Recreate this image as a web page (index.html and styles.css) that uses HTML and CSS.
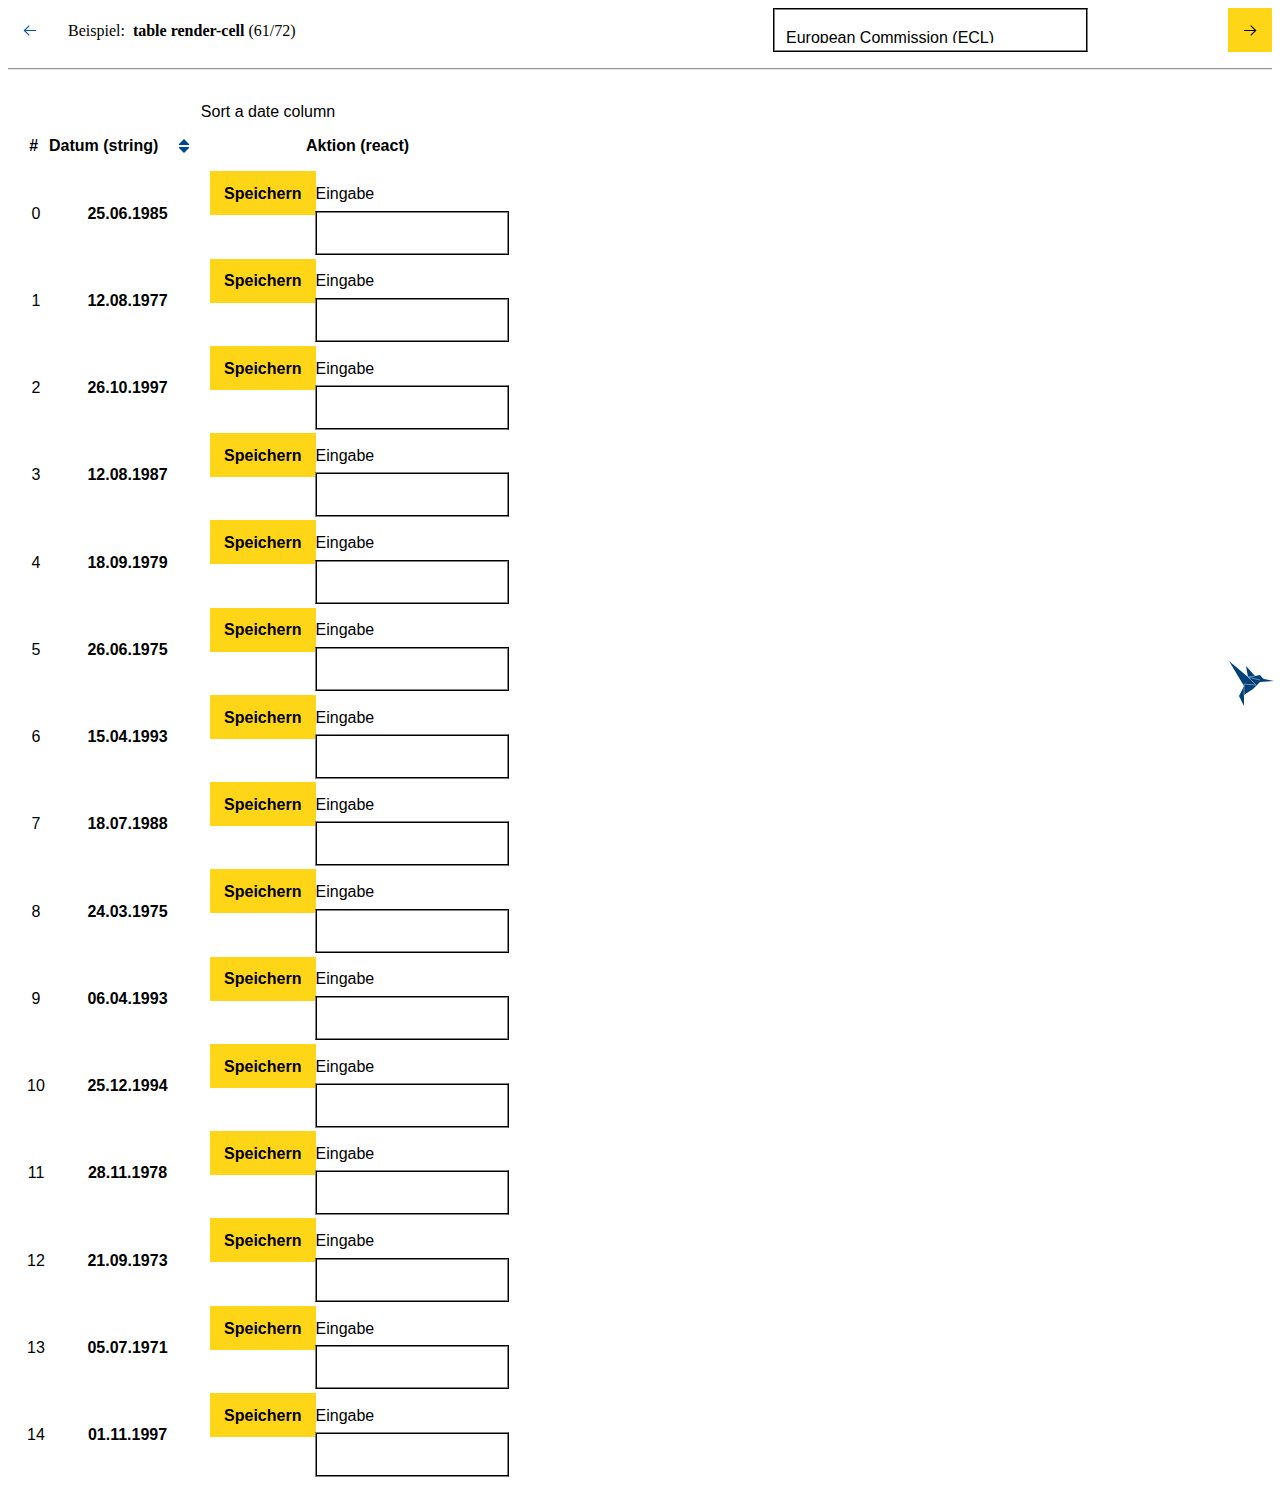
FILE: index.html
```html
<!DOCTYPE html>
<html lang="de">
<head>
<meta charset="utf-8">
<title>table render-cell</title>
<link rel="stylesheet" href="styles.css">
</head>
<body>
<header class="toolbar">
  <button class="nav" aria-label="Zurück"><svg viewBox="0 0 14 14"><path d="M13 7.5H1.3M6.3 2.7L1.3 7.5L6.3 12.3"/></svg></button>
  <div class="title">Beispiel: &nbsp;<b>table render-cell</b> (61/72)</div>
  <div class="select"><span>European Commission (ECL)</span></div>
  <button class="nav next" aria-label="Weiter"><svg viewBox="0 0 14 14"><path d="M1 7.5H12.7M7.7 2.7L12.7 7.5L7.7 12.3"/></svg></button>
</header>
<hr>
<main>
  <div class="caption">Sort a date column</div>
  <div class="head"><span class="c1">#</span><span class="c2">Datum (string)<svg class="sort" viewBox="0 0 10 14"><path d="M5 0L10 5V6H0V5ZM0 8H10V9L5 14L0 9Z"/></svg></span><span class="c3">Aktion (react)</span></div>
  <div id="rows"></div>
</main>
<svg class="bird" viewBox="0 0 46 46"><path d="M0 0L19 16L17 5L26 15L31 14Q33 17 35 18L45 20L31 21L24 28L15 34V45L10 35L15 25Z"/><path class="fold" d="M15 23L27 24M19 16L27 24M19 16L31 19M15 23V34M26 15L19 16"/></svg>
<script src="rows.js"></script>
</body>
</html>
```
FILE: styles.css
```css
body { margin: 8px; background: #fff; color: #000; font: 16px "Liberation Serif", serif; }
.toolbar { display: flex; height: 44px; align-items: center; }
.nav { width: 44px; height: 44px; border: 0; padding: 0; background: none; display: grid; place-items: center; }
.nav svg { width: 14px; height: 14px; fill: none; stroke: #0052a5; stroke-width: 1.1; }
.next { background: #ffd617; margin-left: auto; }
.next svg { stroke: #000; }
.title { width: 705px; margin-left: 16px; padding-top: 2px; }
.select { box-sizing: border-box; width: 315px; height: 44px; border: 1px solid #000; border-right-color: #808080; box-shadow: inset -1px 0 #000, inset 1px 1px #808080, inset 0 -1px #808080; padding: 19px 12px 8px; font-family: "Liberation Sans", sans-serif; overflow: hidden; }
.select span { display: block; height: 15px; line-height: 20px; overflow: hidden; }
hr { margin: 16px 0 0; border: solid; border-width: 1px 0; border-color: #959595 transparent #e6e6e6; }
main { margin-top: 32px; width: 520px; font: 16px/20px "Liberation Sans", sans-serif; }
.caption { text-align: center; }
.head { display: flex; margin-top: 14px; height: 35.25px; font-weight: bold; }
.c1 { width: 56px; text-align: center; box-sizing: border-box; }
.head .c1 { width: 41px; padding-left: 10.5px; }
.head .c2 { width: 141px; display: flex; align-items: center; justify-content: space-between; height: 20px; }
.head .c3 { width: 319px; text-align: center; padding-left: 8px; }
.sort { width: 10px; height: 14px; margin-right: 1px; fill: #004494; }
.row { display: flex; height: 87.27px; }
.row .c1, .row .c2 { flex: none; padding-top: 32.3px; }
.row .c2 { width: 127px; margin-right: 19px; text-align: center; font-weight: bold; }
.save { flex: none; width: 105.5px; height: 44px; border: 0; padding: 1.6px 0 0; background: #ffd617; color: #000; font: bold 16px "Liberation Sans", sans-serif; }
.field { padding-top: 12.8px; }
.label { display: block; margin-bottom: 6.8px; }
.box { box-sizing: border-box; width: 194px; height: 44px; margin-left: -.5px; border: 1px solid #000; border-left-color: #808080; box-shadow: inset 1px 0 #000, inset -1px 1px #808080, inset 0 -1px #808080; }
.label + .half { height: 45px; margin-top: -7.3px; border-color: #808080 #000 #808080 #808080; box-shadow: inset 1px 1px #000, inset 0 -1px #000, inset -1px 0 #808080; }
.row:nth-child(4n+3) .label, .row:nth-child(4n) .label { margin-bottom: 13.6px; }
.bird { position: fixed; right: 5.5px; top: 660.5px; width: 46px; height: 46px; fill: #004078; }
.bird .fold { fill: none; stroke: #a8c9df; stroke-width: .6; }
```
FILE: rows.js
```js
const dates = ["25.06.1985", "12.08.1977", "26.10.1997", "12.08.1987", "18.09.1979", "26.06.1975", "15.04.1993", "18.07.1988", "24.03.1975", "06.04.1993", "25.12.1994", "28.11.1978", "21.09.1973", "05.07.1971", "01.11.1997"];
document.getElementById("rows").innerHTML = dates.map((date, i) =>
  `<div class="row"><span class="c1">${i}</span><span class="c2">${date}</span><button class="save">Speichern</button><div class="field"><span class="label">Eingabe</span><div class="box${i % 4 > 1 ? " half" : ""}"></div></div></div>`
).join("");
```
